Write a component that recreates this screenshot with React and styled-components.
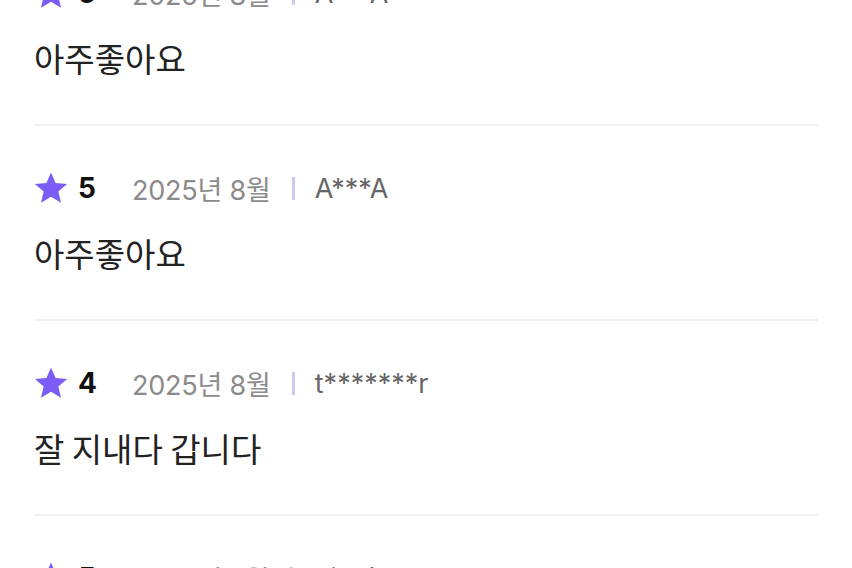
import React from "react";
import styled, { createGlobalStyle } from "styled-components";

const Global = createGlobalStyle`
  html, body { margin: 0; padding: 0; background: #ffffff; overflow: hidden; }
  body { font-family: Inter, "Noto Sans CJK KR", sans-serif; }
`;

const Page = styled.div`
  width: 852px;
  height: 568px;
  overflow: hidden;
  background: #fff;
`;

const List = styled.ul`
  list-style: none;
  margin: -69px 0 0 0;
  padding: 0 34px;
`;

const Item = styled.li`
  padding: 44px 0 46px 0;
  border-bottom: 2px solid #f1f1f1;
`;

const Header = styled.div`
  display: flex;
  align-items: center;
  height: 36px;
`;

const Star = styled.svg`
  width: 36px;
  height: 36px;
  margin-left: -1px;
  flex: none;
`;

const Score = styled.span`
  margin-left: 9px;
  font-size: 28px;
  font-weight: 700;
  color: #111;
  width: 19px;
`;

const DateText = styled.span`
  margin-left: 35px;
  font-size: 27px;
  color: #8b8b8b;
  letter-spacing: -0.2px;
`;

const Sep = styled.span`
  display: inline-block;
  width: 3px;
  height: 23px;
  background: #cdc7f2;
  margin: 0 20px 0 21px;
`;

const User = styled.span`
  font-size: 27px;
  color: #666666;
`;

const Body = styled.p`
  margin: 27px 0 0 0;
  font-size: 33px;
  line-height: 40px;
  color: #222;
  font-family: "Noto Sans CJK KR", sans-serif;
  font-weight: 400;
`;

const reviews = [
  { score: 5, date: "2025년 8월", user: "A***A", text: "아주좋아요" },
  { score: 5, date: "2025년 8월", user: "A***A", text: "아주좋아요" },
  { score: 4, date: "2025년 8월", user: "t*******r", text: "잘 지내다 갑니다" },
  { score: 5, date: "2025년 7월", user: "김*리", text: "좋았어요" },
];

function StarIcon() {
  return (
    <Star viewBox="0 0 24 24">
      <path
        d="M12 1.6l3.05 7.1 7.7.62-5.86 5.03 1.8 7.52L12 17.85l-6.69 4.02 1.8-7.52L1.25 9.32l7.7-.62z"
        fill="#7b5cf5"
      />
    </Star>
  );
}

export default function App() {
  return (
    <Page>
      <Global />
      <List>
        {reviews.map((r, i) => (
          <Item key={i}>
            <Header>
              <StarIcon />
              <Score>{r.score}</Score>
              <DateText>{r.date}</DateText>
              <Sep />
              <User>{r.user}</User>
            </Header>
            <Body>{r.text}</Body>
          </Item>
        ))}
      </List>
    </Page>
  );
}
